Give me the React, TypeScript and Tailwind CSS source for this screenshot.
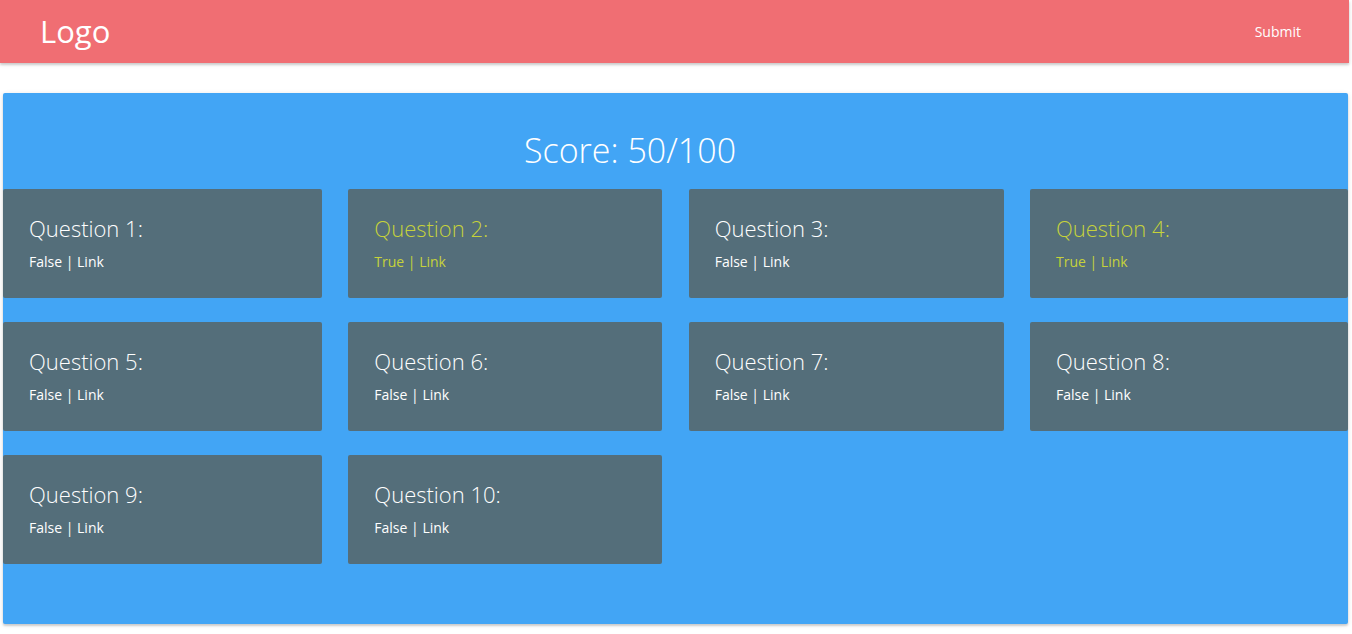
const QUESTIONS = [
  { n: 1, ok: false },
  { n: 2, ok: true },
  { n: 3, ok: false },
  { n: 4, ok: true },
  { n: 5, ok: false },
  { n: 6, ok: false },
  { n: 7, ok: false },
  { n: 8, ok: false },
  { n: 9, ok: false },
  { n: 10, ok: false },
];

function QuestionCard({ n, ok }: { n: number; ok: boolean }) {
  const tone = ok ? "text-[#c6d23a]" : "text-white";
  return (
    <div className={`flex h-[109px] flex-col rounded-[2px] bg-[#546e7a] pl-[26px] pt-[25px] ${tone}`}>
      <h3 className="text-[22px] font-light leading-[28px]">Question {n}:</h3>
      <p className="mt-[10px] text-[14px] leading-[20px]">
        {ok ? "True" : "False"} | <a href="#">Link</a>
      </p>
    </div>
  );
}

export default function App() {
  return (
    <div className="min-h-screen bg-white font-['Open_Sans',sans-serif]">
      <nav className="mr-[3px] flex h-[63px] items-center justify-between bg-[#f06e73] pl-[40px] pr-[48px] text-white shadow-[0_2px_2px_0_rgba(0,0,0,0.14),0_1px_5px_0_rgba(0,0,0,0.12)]">
        <a href="#" className="text-[31px] leading-none">Logo</a>
        <a href="#" className="text-[14px]">Submit</a>
      </nav>

      <main className="ml-[3px] mr-[4px] mt-[30px] rounded-[2px] bg-[#42a5f5] pb-[60px] shadow-[0_2px_2px_0_rgba(0,0,0,0.14),0_1px_5px_0_rgba(0,0,0,0.12)]">
        <h2 className="pr-[91px] pt-[34px] pb-[16px] text-center text-[34px] font-light leading-[46px] text-white">
          Score: 50/100
        </h2>
        <div className="grid grid-cols-[319px_314px_315px_318px] justify-between gap-y-[24px]">
          {QUESTIONS.map((q) => (
            <QuestionCard key={q.n} n={q.n} ok={q.ok} />
          ))}
        </div>
      </main>
    </div>
  );
}
